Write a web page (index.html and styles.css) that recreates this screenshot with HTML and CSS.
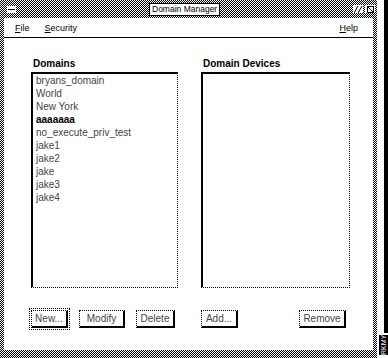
FILE: index.html
```html
<!DOCTYPE html>
<html lang="en">
<head>
    <meta charset="UTF-8">
    <title>Domain Manager</title>
    <link rel="stylesheet" href="styles.css">
</head>
<body>
    <div class="desktop">
        <div class="window">
            <div class="titlebar">
                <span class="wm-menu"><span class="wm-bar"></span></span>
                <span class="title">Domain Manager</span>
                <span class="wm-buttons">
                    <span class="wm-btn">
                        <svg width="9" height="7" viewBox="0 0 9 7"><path d="M0 7 L4 0 M4 7 L8 0" stroke="#000" stroke-width="1" fill="none"/></svg>
                    </span>
                    <span class="wm-btn">
                        <svg width="9" height="7" viewBox="0 0 9 7"><rect x="1.5" y="0.5" width="6" height="6" stroke="#000" fill="none"/><path d="M2 1 L7 6" stroke="#000"/></svg>
                    </span>
                </span>
            </div>
            <div class="inner">
                <div class="menubar">
                    <span class="menu"><u>F</u>ile</span>
                    <span class="menu"><u>S</u>ecurity</span>
                    <span class="menu help"><u>H</u>elp</span>
                </div>
                <div class="panes">
                    <div class="pane domains">
                        <div class="label">Domains</div>
                        <ul class="list">
                            <li>bryans_domain</li>
                            <li>World</li>
                            <li>New York</li>
                            <li class="strong">aaaaaaa</li>
                            <li>no_execute_priv_test</li>
                            <li>jake1</li>
                            <li>jake2</li>
                            <li>jake</li>
                            <li>jake3</li>
                            <li>jake4</li>
                        </ul>
                        <div class="buttons">
                            <button class="btn btn-new default">New...</button>
                            <button class="btn btn-modify">Modify</button>
                            <button class="btn btn-delete">Delete</button>
                        </div>
                    </div>
                    <div class="pane devices">
                        <div class="label">Domain Devices</div>
                        <ul class="list"></ul>
                        <div class="buttons">
                            <button class="btn btn-add">Add...</button>
                            <button class="btn btn-remove">Remove</button>
                        </div>
                    </div>
                </div>
            </div>
        </div>
        <div class="edge">
            <div class="edge-bar"></div>
            <div class="edge-label">RKMY</div>
        </div>
    </div>
</body>
</html>
```

FILE: styles.css
```css
body {
    margin: 0;
    background: #fff;
    font-family: "Liberation Sans", Arial, sans-serif;
    font-size: 10px;
    color: #000;
}

.desktop {
    display: flex;
    width: 388px;
    height: 358px;
    overflow: hidden;
}

/* dithered gray, like a 1-bit display */
.window {
    width: 377px;
    height: 358px;
    box-sizing: border-box;
    padding-bottom: 8px;
    display: flex;
    flex-direction: column;
    background: repeating-conic-gradient(#000 0 25%, #fff 0 50%) 0 0 / 2px 2px;
}

.titlebar {
    height: 18px;
    display: flex;
    align-items: center;
    padding: 0 2px 0 7px;
}

.wm-menu {
    width: 9px;
    height: 7px;
    background: #fff;
    display: flex;
    align-items: center;
    justify-content: center;
}

.wm-bar {
    width: 7px;
    height: 1px;
    background: #000;
}

.title {
    margin-left: 133px;
    height: 11px;
    line-height: 11px;
    padding: 0 2px;
    background: #fff;
    border: 1px solid #000;
    font-size: 8.5px;
    white-space: nowrap;
}

.wm-buttons {
    margin-left: auto;
    display: flex;
    gap: 2px;
}

.wm-btn {
    width: 10px;
    height: 8px;
    background: #fff;
    display: flex;
    align-items: center;
    justify-content: center;
}

.inner {
    flex: 1;
    margin: 0 4px;
    background: #fff;
    display: flex;
    flex-direction: column;
}

.menubar {
    height: 19px;
    border-bottom: 1px solid #000;
    display: flex;
    align-items: center;
    padding: 0 15px 0 11px;
    font-size: 9px;
}

.menu + .menu {
    margin-left: 15px;
}

.menu.help {
    margin-left: auto;
}

.panes {
    flex: 1;
    display: flex;
    gap: 23px;
    padding: 20px 0 0 27px;
}

.pane {
    display: flex;
    flex-direction: column;
}

.domains {
    width: 147px;
}

.devices {
    width: 149px;
}

.label {
    height: 12px;
    line-height: 12px;
    margin-bottom: 2px;
    padding-left: 2px;
    font-weight: bold;
}

.list {
    height: 216px;
    box-sizing: border-box;
    margin: 0;
    padding: 0 0 0 3px;
    list-style: none;
    border-style: solid dotted dotted solid;
    border-width: 2px 1px 1px 2px;
    border-color: #000;
}

.list li {
    line-height: 13px;
    white-space: nowrap;
    color: #444;
}

.list li.strong {
    font-weight: bold;
    color: #000;
}

.buttons {
    display: flex;
    justify-content: space-between;
    margin-top: 22px;
}

.domains .buttons {
    padding-right: 3px;
}

.devices .buttons {
    padding-right: 4px;
}

.btn {
    height: 18px;
    box-sizing: border-box;
    padding: 0;
    background: #fff;
    color: #444;
    font-family: "Liberation Sans", Arial, sans-serif;
    font-size: 10px;
    border-style: dotted solid solid dotted;
    border-width: 1px 2px 2px 1px;
    border-color: #000;
}

.btn.default {
    outline: 1px dotted #000;
    outline-offset: 1px;
}

.btn-new { width: 37px; }
.btn-modify { width: 46px; }
.btn-delete { width: 39px; }
.btn-add { width: 37px; }
.btn-remove { width: 47px; }

.edge {
    width: 11px;
    display: flex;
    flex-direction: column;
}

.edge-bar {
    flex: 1;
    border-right: 4px solid #000;
}

.edge-label {
    height: 20px;
    margin: 2px 0 3px 2px;
    background: #000;
    color: #fff;
    font-size: 7px;
    line-height: 9px;
    writing-mode: vertical-rl;
    transform: rotate(180deg);
    text-align: center;
}
```
